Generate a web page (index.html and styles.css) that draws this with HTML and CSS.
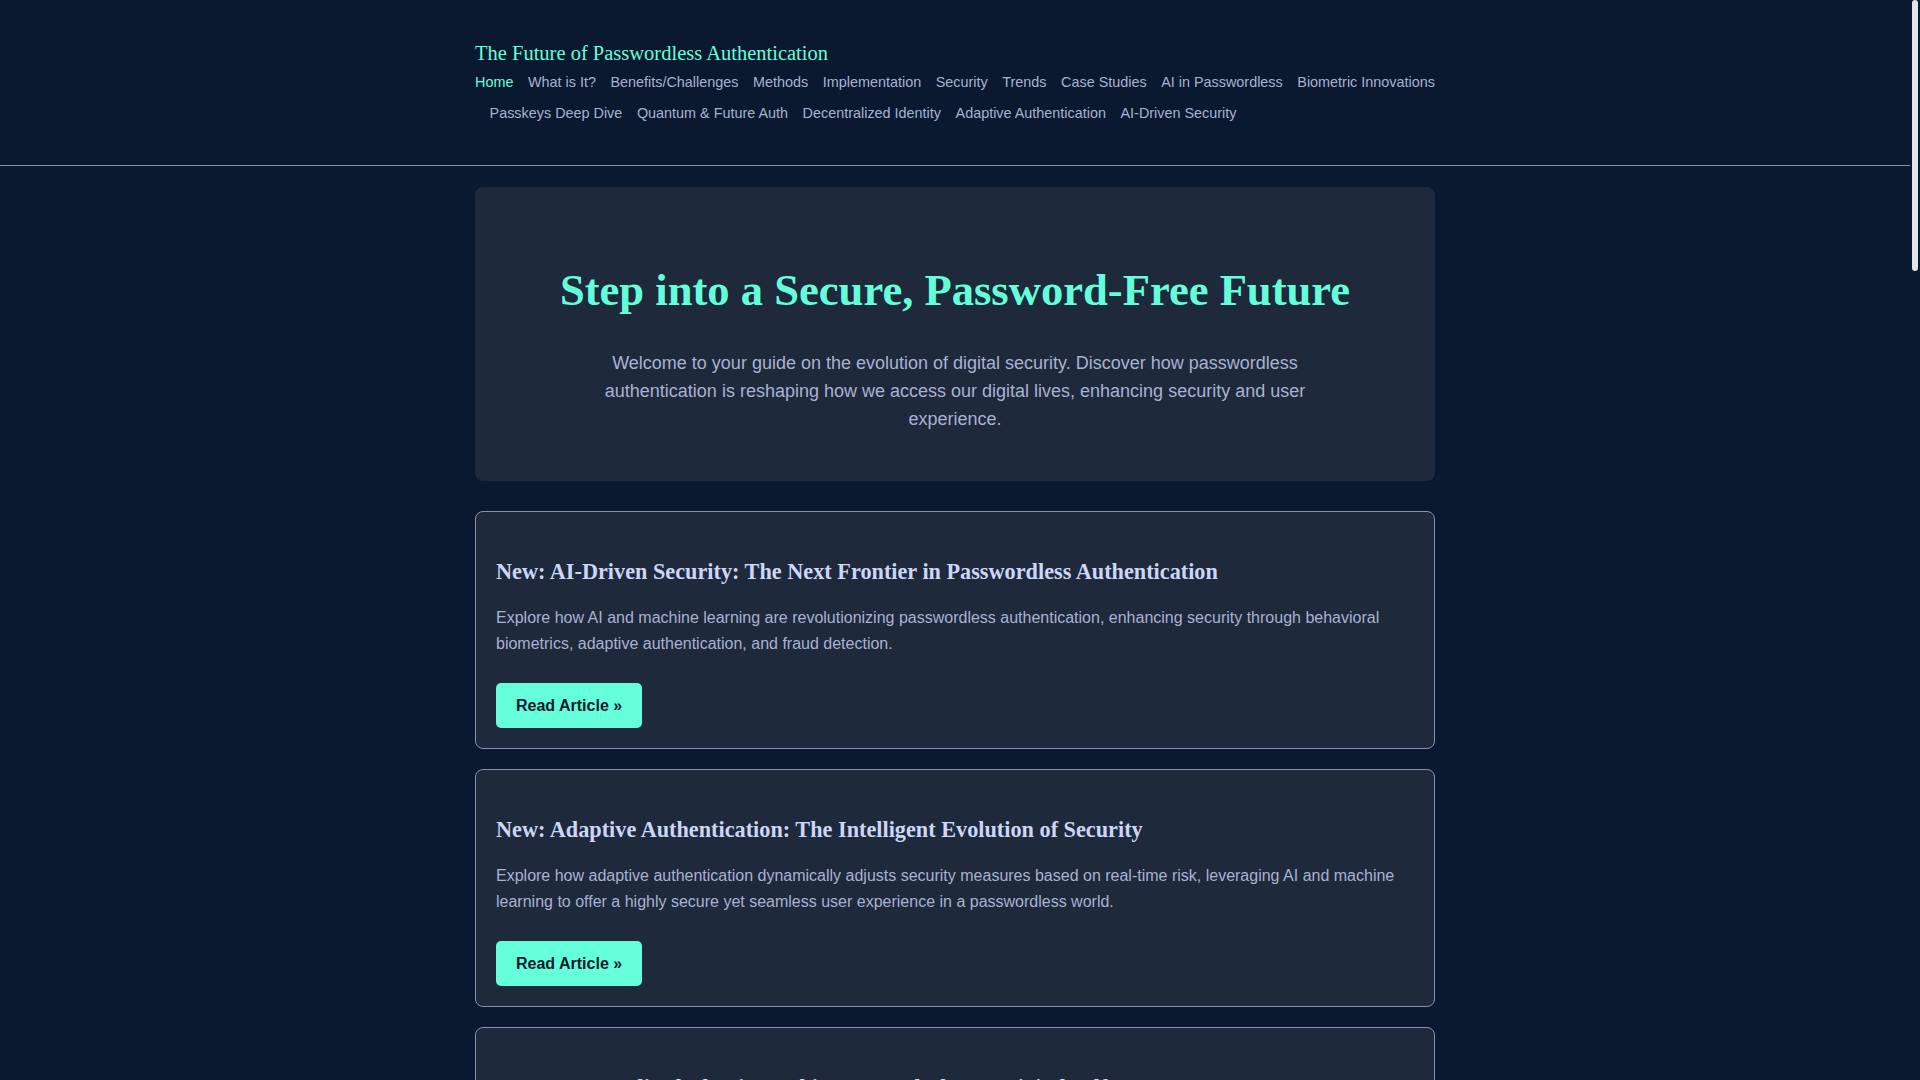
FILE: index.html
```html
<!DOCTYPE html>
<html lang="en">
<head>
<meta charset="utf-8">
<title>The Future of Passwordless Authentication</title>
<link rel="stylesheet" href="styles.css">
</head>
<body>
<header class="site-header">
  <div class="container">
    <div class="site-title">The Future of Passwordless Authentication</div>
    <nav>
      <ul class="nav-list">
        <li><a class="active" href="#">Home</a></li>
        <li><a href="#">What is It?</a></li>
        <li><a href="#">Benefits/Challenges</a></li>
        <li><a href="#">Methods</a></li>
        <li><a href="#">Implementation</a></li>
        <li><a href="#">Security</a></li>
        <li><a href="#">Trends</a></li>
        <li><a href="#">Case Studies</a></li>
        <li><a href="#">AI in Passwordless</a></li>
        <li><a href="#">Biometric Innovations</a></li>
        <li><a href="#">Passkeys Deep Dive</a></li>
        <li><a href="#">Quantum &amp; Future Auth</a></li>
        <li><a href="#">Decentralized Identity</a></li>
        <li><a href="#">Adaptive Authentication</a></li>
        <li><a href="#">AI-Driven Security</a></li>
      </ul>
    </nav>
  </div>
</header>

<main class="container main">
  <section class="hero">
    <h1>Step into a Secure, Password-Free Future</h1>
    <p>Welcome to your guide on the evolution of digital security. Discover how passwordless authentication is reshaping how we access our digital lives, enhancing security and user experience.</p>
  </section>

  <article class="card">
    <h2>New: AI-Driven Security: The Next Frontier in Passwordless Authentication</h2>
    <p>Explore how AI and machine learning are revolutionizing passwordless authentication, enhancing security through behavioral biometrics, adaptive authentication, and fraud detection.</p>
    <a class="btn" href="#">Read Article &raquo;</a>
  </article>

  <article class="card">
    <h2>New: Adaptive Authentication: The Intelligent Evolution of Security</h2>
    <p>Explore how adaptive authentication dynamically adjusts security measures based on real-time risk, leveraging AI and machine learning to offer a highly secure yet seamless user experience in a passwordless world.</p>
    <a class="btn" href="#">Read Article &raquo;</a>
  </article>

  <article class="card">
    <h2>New: Decentralized Identity: Taking Control of Your Digital Self</h2>
    <p>Discover how decentralized identity and self-sovereign credentials put users in charge of their personal data, removing the need for passwords and central identity providers.</p>
    <a class="btn" href="#">Read Article &raquo;</a>
  </article>

  <article class="card">
    <h2>New: Quantum &amp; Future Auth: Preparing for a Post-Quantum World</h2>
    <p>Learn how quantum computing threatens today's cryptography and how quantum-resistant algorithms will shape the next generation of passwordless authentication.</p>
    <a class="btn" href="#">Read Article &raquo;</a>
  </article>

  <article class="card">
    <h2>Passkeys Deep Dive: How FIDO2 and WebAuthn Work</h2>
    <p>A closer look at passkeys, the public-key credentials that are replacing passwords across major platforms, and how they keep users safe from phishing.</p>
    <a class="btn" href="#">Read Article &raquo;</a>
  </article>

  <article class="card">
    <h2>Biometric Innovations: Beyond Fingerprints and Faces</h2>
    <p>From vein patterns to voice and gait recognition, explore the newest biometric technologies making authentication both more secure and more convenient.</p>
    <a class="btn" href="#">Read Article &raquo;</a>
  </article>

  <article class="card">
    <h2>AI in Passwordless: Smarter Identity Verification</h2>
    <p>See how artificial intelligence analyses signals and context to verify users continuously without ever asking them to type a password.</p>
    <a class="btn" href="#">Read Article &raquo;</a>
  </article>

  <article class="card">
    <h2>Case Studies: Organizations Going Passwordless</h2>
    <p>Real-world stories of companies that eliminated passwords, the challenges they faced, and the measurable gains in security and productivity.</p>
    <a class="btn" href="#">Read Article &raquo;</a>
  </article>

  <article class="card">
    <h2>Trends: Where Passwordless Authentication Is Heading</h2>
    <p>An overview of the market, standards and technology trends that are driving the global shift away from passwords.</p>
    <a class="btn" href="#">Read Article &raquo;</a>
  </article>

  <article class="card">
    <h2>Security: Understanding the Threat Model</h2>
    <p>How passwordless methods defend against phishing, credential stuffing and other attacks, and which risks still remain.</p>
    <a class="btn" href="#">Read Article &raquo;</a>
  </article>
</main>

<footer class="site-footer">
  <div class="container">
    <p>&copy; 2024 The Future of Passwordless Authentication. All rights reserved.</p>
  </div>
</footer>

<div class="scrollbar" aria-hidden="true"><div class="scrollbar-thumb"></div></div>
</body>
</html>
```

FILE: styles.css
```css
html {
  background: #0a192f;
}

body {
  margin: 0 10px 0 0;
  background: #0a192f;
  color: #a8b2d1;
  font-family: "Liberation Sans", Arial, sans-serif;
  font-size: 16px;
  line-height: 1.6;
}

.container {
  max-width: 960px;
  margin: 0 auto;
}

.site-header {
  padding: 40px 0 36px;
  border-bottom: 1px solid #8892b0;
}

.site-title {
  font-family: "Liberation Serif", "Times New Roman", serif;
  font-size: 20.5px;
  line-height: 27px;
  color: #64ffda;
}

.nav-list {
  list-style: none;
  margin: 0 -6px 0 0;
  padding: 0;
  display: flex;
  flex-wrap: wrap;
}

.nav-list li {
  font-size: 14.4px;
  line-height: 21px;
  padding: 5px 0;
}

.nav-list li + li {
  margin-left: 14.55px;
}

.nav-list a {
  color: #a8b2d1;
  text-decoration: none;
}

.nav-list a.active {
  color: #64ffda;
}

.main {
  padding-top: 21px;
  padding-bottom: 20px;
}

.hero {
  background: #1e293b;
  border-radius: 8px;
  padding: 40px 40px 48px;
  text-align: center;
  margin-bottom: 30px;
}

.hero h1 {
  font-family: "Liberation Serif", "Times New Roman", serif;
  font-size: 44.6px;
  font-weight: bold;
  line-height: 1.6;
  color: #64ffda;
  margin: 27.5px 0 23.5px;
}

.hero p {
  max-width: 750px;
  margin: 0 auto;
  font-size: 18px;
  line-height: 28px;
}

.card {
  background: #1e293b;
  border: 1px solid #8892b0;
  border-radius: 8px;
  padding: 20px;
  margin-bottom: 20px;
}

.card h2 {
  font-family: "Liberation Serif", "Times New Roman", serif;
  font-size: 22.25px;
  font-weight: bold;
  line-height: 1.6;
  color: #ccd6f6;
  margin: 21.5px 0 16px;
}

.card p {
  margin: 0 0 26px;
}

.btn {
  display: inline-block;
  background: #64ffda;
  color: #0a192f;
  font-weight: bold;
  text-decoration: none;
  padding: 10px 20px;
  border-radius: 5px;
}

.site-footer {
  border-top: 1px solid #8892b0;
  padding: 20px 0;
  text-align: center;
  font-size: 14px;
}

.site-footer p {
  margin: 0;
}

.scrollbar {
  position: fixed;
  top: 0;
  right: 0;
  width: 10px;
  height: 100vh;
  background: #0a192f;
}

.scrollbar-thumb {
  height: 271px;
  margin: 0 2px 0 1.5px;
  border-radius: 3px;
  background: #dfe3ea;
}
```
